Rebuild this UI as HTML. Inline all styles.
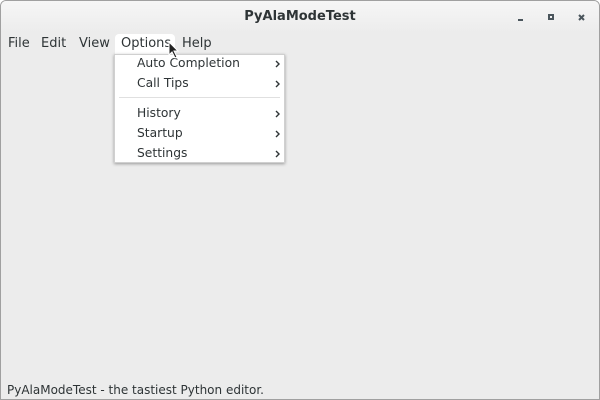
<!DOCTYPE html>
<html><head><style>
body{margin:0;width:600px;height:400px;overflow:hidden;font-family:"DejaVu Sans","Liberation Sans",sans-serif;font-size:12px;color:#2e3436;background:#fff}
.win{position:absolute;left:0;top:0;width:598px;height:398px;border:1px solid #a0a0a0;border-radius:6px 6px 0 0;background:#ececec;overflow:hidden}
.title{position:absolute;left:0;top:0;width:598px;height:32px;background:linear-gradient(#f6f6f6,#ececec);text-align:center;line-height:32px;font-weight:bold;font-size:13px;color:#2e3436}
.menu span{position:absolute;top:34px;line-height:18px;font-size:13px}
.opt{position:absolute;left:114px;top:33px;width:60px;height:21px;background:#fff;border-radius:4px 4px 0 0}
.pop{position:absolute;left:113px;top:53px;width:171px;height:109px;background:#fff;box-shadow:0 1px 3px rgba(0,0,0,.35);border:1px solid #d0d0d0;box-sizing:border-box}
.pop div{position:absolute;left:22px;line-height:18px;font-size:12.3px}
.pop svg{position:absolute;right:4px}
.sep{position:absolute;left:4px;right:4px;top:42px;height:1px;background:#e0e0e0}
.status{position:absolute;left:6px;top:380px;line-height:18px;font-size:12px}
.ctl{position:absolute;background:#4a555c}
</style></head><body>
<div class="win">
<div class="title">PyAlaModeTest</div>
<div class="ctl" style="left:517px;top:18px;width:5px;height:2px"></div>
<div class="ctl" style="left:547px;top:13px;width:6px;height:6px;background:none;border:2px solid #4a555c;box-sizing:border-box"></div>
<svg style="position:absolute;left:577px;top:13px" width="7" height="7" viewBox="0 0 7 7"><path d="M1 1L6 6M6 1L1 6" stroke="#4a555c" stroke-width="2"/></svg>
<div class="opt"></div>
<div class="menu"><span style="left:7px">File</span><span style="left:40px">Edit</span><span style="left:78px">View</span><span style="left:120px">Options</span><span style="left:181px">Help</span></div>
<div class="pop">
<div style="top:-1px">Auto Completion</div><svg style="top:5px" width="5" height="8"><path d="M1 1L4 4L1 7" stroke="#2e3436" stroke-width="1.4" fill="none"/></svg>
<div style="top:19px">Call Tips</div><svg style="top:25px" width="5" height="8"><path d="M1 1L4 4L1 7" stroke="#2e3436" stroke-width="1.4" fill="none"/></svg>
<span class="sep"></span>
<div style="top:49px">History</div><svg style="top:55px" width="5" height="8"><path d="M1 1L4 4L1 7" stroke="#2e3436" stroke-width="1.4" fill="none"/></svg>
<div style="top:69px">Startup</div><svg style="top:75px" width="5" height="8"><path d="M1 1L4 4L1 7" stroke="#2e3436" stroke-width="1.4" fill="none"/></svg>
<div style="top:89px">Settings</div><svg style="top:95px" width="5" height="8"><path d="M1 1L4 4L1 7" stroke="#2e3436" stroke-width="1.4" fill="none"/></svg>
</div>
<svg style="position:absolute;left:167px;top:40px" width="12" height="18" viewBox="0 0 12 18"><path d="M1 1 L1 14 L4 11 L7 17 L9 16 L6 10 L10 10 Z" fill="#222" stroke="#fff" stroke-width="1"/></svg>
<div class="status">PyAlaModeTest - the tastiest Python editor.</div>
</div>
</body></html>
